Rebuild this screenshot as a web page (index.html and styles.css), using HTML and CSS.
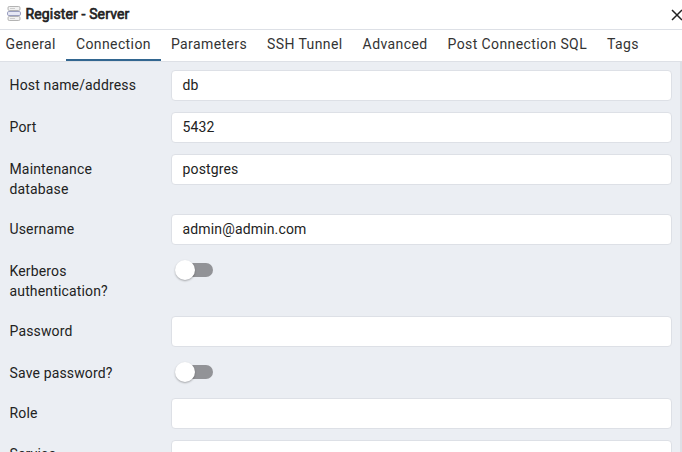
FILE: index.html
```
<!DOCTYPE html>
<html lang="en">
<head>
<meta charset="utf-8">
<title>Register - Server</title>
<link rel="stylesheet" href="styles.css">
</head>
<body>
<div class="dialog">
  <header class="titlebar">
    <svg class="server-icon" width="14" height="15" viewBox="0 0 14 15" fill="#f1f1f1" stroke="#aaa" stroke-width=".9">
      <rect x="1" y=".5" width="12" height="4" rx="1.3"/>
      <rect x="1" y="10.5" width="12" height="4" rx="1.3"/>
      <rect x=".5" y="5.5" width="13" height="4" rx="1.3" fill="#e6e8f5" stroke="#8f94b8"/>
      <path d="M3 2.5h5M3 12.5h5" stroke="#c8c8c8"/>
    </svg>
    <h1 class="title">Register - Server</h1>
    <svg class="close" width="12" height="12" viewBox="0 0 12 12" fill="none" stroke="#222" stroke-width="1.5"><path d="M1 1l10 10M11 1L1 11"/></svg>
  </header>
  <nav class="tabs">
    <span class="tab">General</span>
    <span class="tab active">Connection</span>
    <span class="tab">Parameters</span>
    <span class="tab">SSH Tunnel</span>
    <span class="tab">Advanced</span>
    <span class="tab">Post Connection SQL</span>
    <span class="tab">Tags</span>
  </nav>
  <main class="form">
    <div class="row"><label>Host name/address</label><div class="input">db</div></div>
    <div class="row"><label>Port</label><div class="input">5432</div></div>
    <div class="row"><label>Maintenance database</label><div class="input">postgres</div></div>
    <div class="row"><label>Username</label><div class="input">admin@admin.com</div></div>
    <div class="row"><label>Kerberos authentication?</label><div class="switch"><i class="thumb"></i></div></div>
    <div class="row"><label>Password</label><div class="input"></div></div>
    <div class="row compact"><label>Save password?</label><div class="switch"><i class="thumb"></i></div></div>
    <div class="row"><label>Role</label><div class="input"></div></div>
    <div class="row"><label>Service</label><div class="input"></div></div>
  </main>
</div>
</body>
</html>
```
FILE: styles.css
```
* { box-sizing: border-box; }
body {
  margin: 0;
  overflow: hidden;
  font: 14px/20px Roboto, sans-serif;
  letter-spacing: 0.15px;
  color: #222;
}
.dialog {
  display: flex;
  flex-direction: column;
  height: 452px;
  background: #fff;
}
.titlebar {
  display: flex;
  align-items: center;
  flex: none;
  height: 30px;
  padding: 0 0 2px 7px;
  border-bottom: 1px solid #dde0e6;
}
.title {
  flex: 1;
  margin: 0 0 0 4.5px;
  font-size: 14px;
  font-weight: 400;
  -webkit-text-stroke: 0.65px #222;
  line-height: 20px;
  letter-spacing: 0.14px;
}
.server-icon { flex: none; }
.close { flex: none; margin: 2px -1px 0 0; }
.tabs {
  display: flex;
  flex: none;
  height: 32px;
  padding-left: 5.5px;
  border-bottom: 1px solid #dde0e6;
  letter-spacing: 0.4px;
  white-space: nowrap;
}
.tab {
  padding: 4px 10px 0;
  color: #333;
}
.tab:first-child { padding-left: 0; }
.tab.active { border-bottom: 2px solid #326690; }
.form {
  flex: 1;
  min-height: 0;
  overflow: hidden;
  padding: 8px 8px 0 9.5px;
  background: #ebeef3;
  border-right: 2px solid #dde0e6;
}
.row {
  display: grid;
  grid-template-columns: 135.5px 501px;
  column-gap: 26px;
  align-items: start;
  min-height: 42px;
}
.row label { padding: 5px 0 15px; }
.row.compact label { padding-bottom: 10px; }
.row.compact { min-height: 40px; }
.row:last-child label { padding-top: 4px; }
.input {
  height: 31px;
  padding: 4px 10.5px;
  background: #fff;
  border: 1px solid #dde0e6;
  border-radius: 4px;
}
.switch {
  display: flex;
  width: 34px;
  height: 14px;
  margin: 7px 0 0 8px;
  border-radius: 7px;
  background: #929397;
}
.thumb {
  flex: none;
  width: 20px;
  height: 20px;
  margin: -3px 0 0 -4px;
  border-radius: 50%;
  background: #fff;
  box-shadow: 0 1px 2px rgba(0, 0, 0, .3);
}
```
